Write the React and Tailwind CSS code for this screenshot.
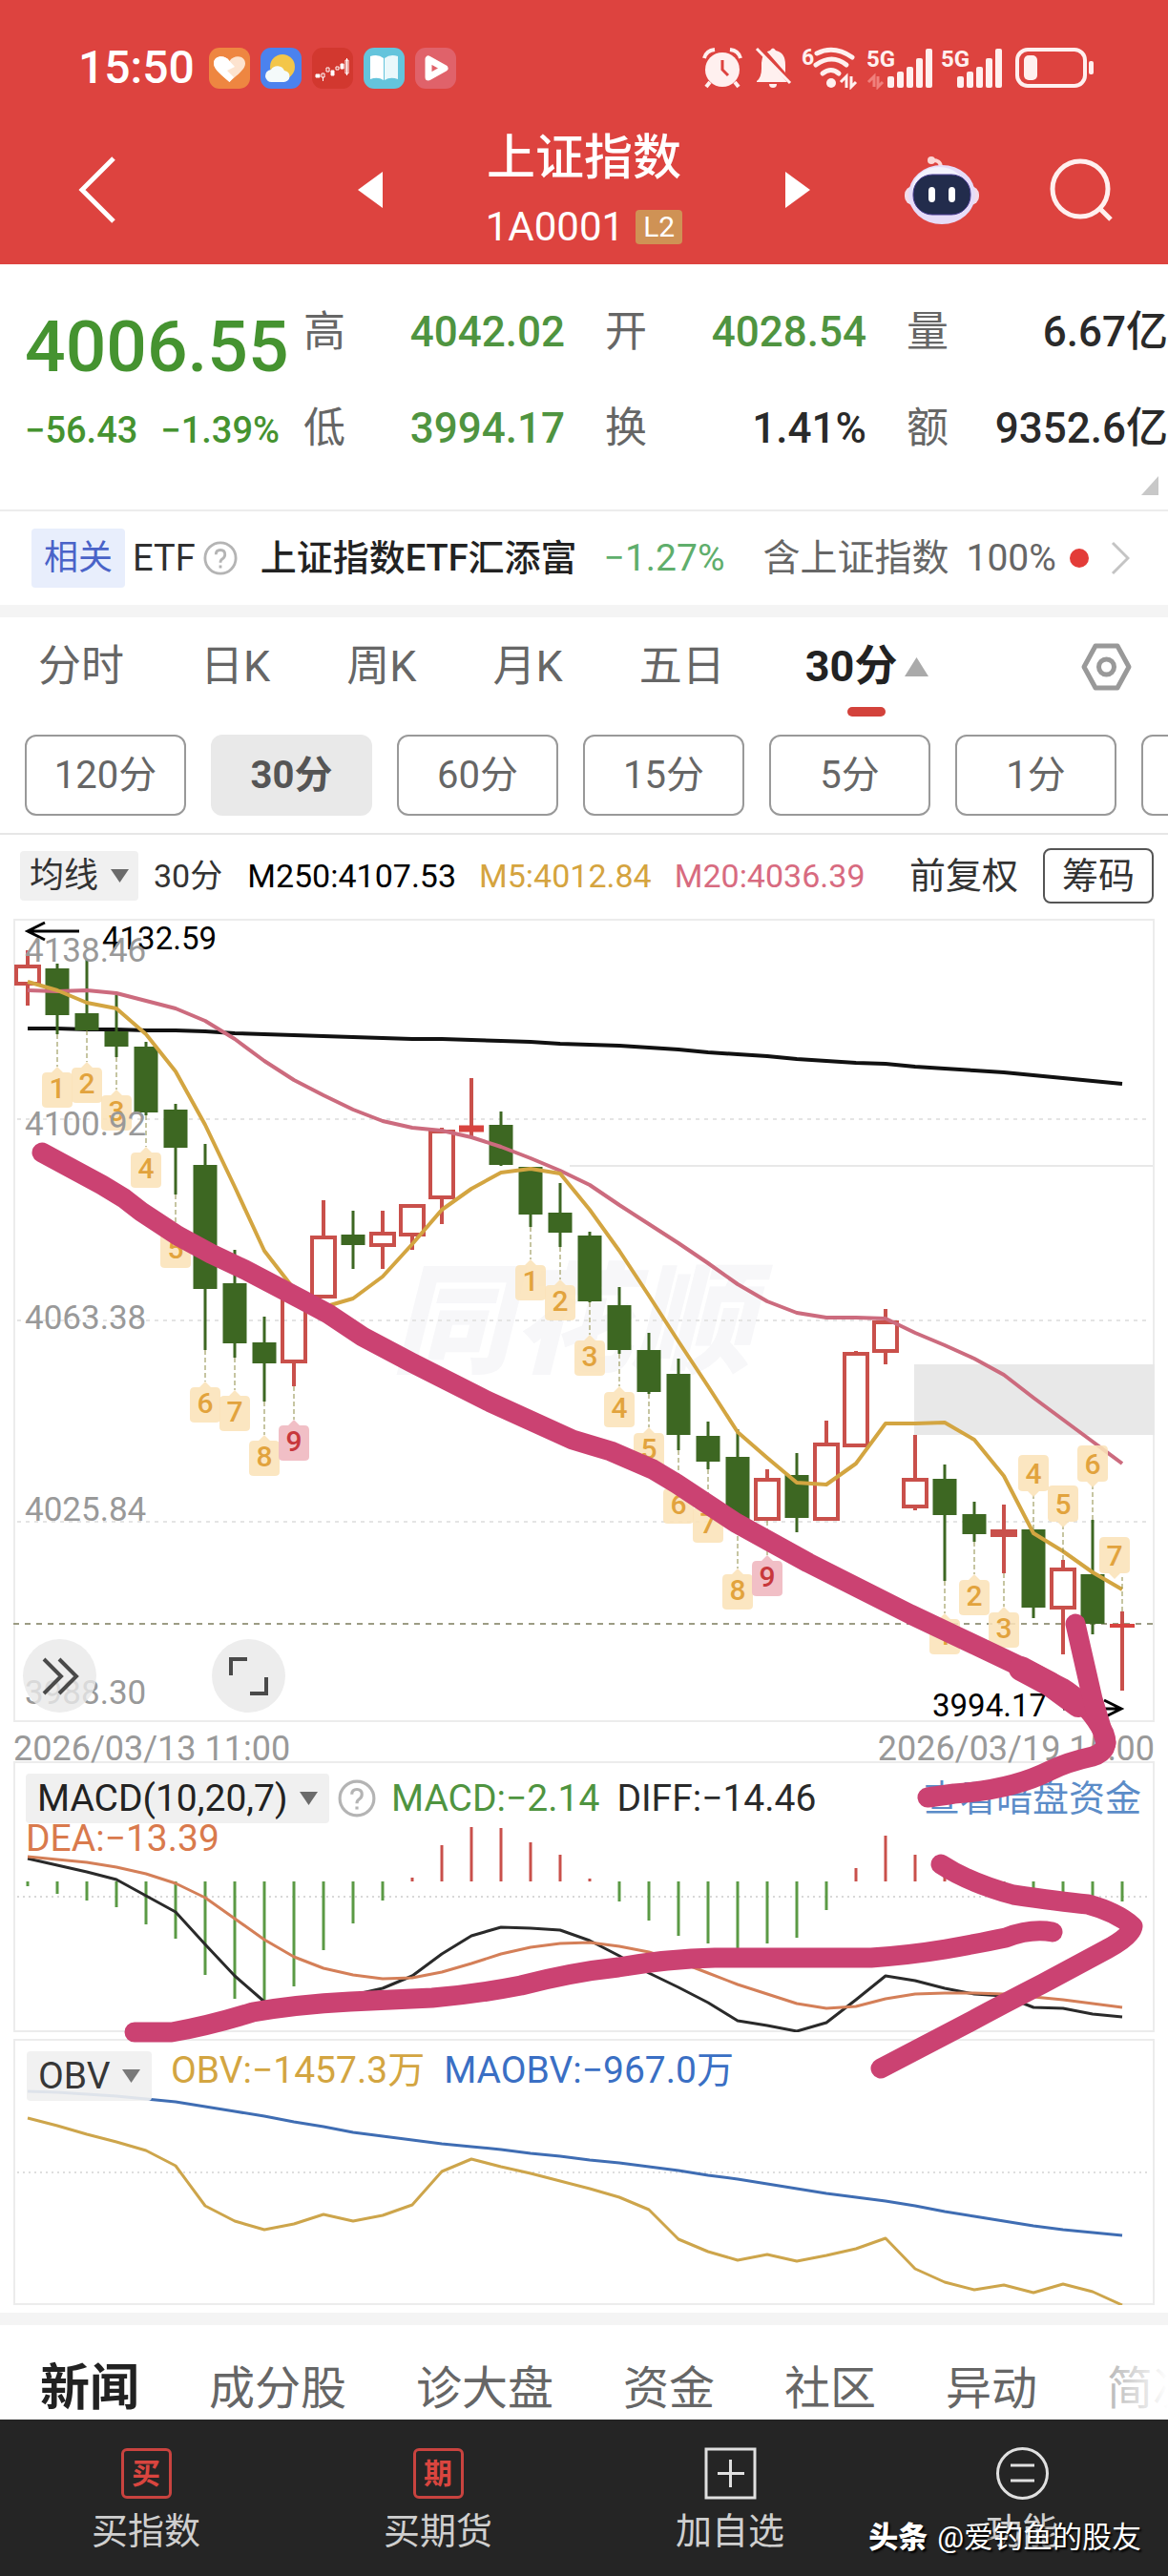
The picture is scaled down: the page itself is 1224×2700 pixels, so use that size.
import React, { useState } from 'react';

const STEP = 31;
const X0 = 15;
const cx = (i) => X0 + i * STEP;

// [up, high, bodyTop, bodyBottom, low]
const candles = [
  [1, 33, 50, 68, 91],
  [0, 47, 52, 101, 121],
  [0, 43, 99, 117, 117],
  [0, 80, 118, 134, 145],
  [0, 129, 134, 203, 206],
  [0, 194, 200, 240, 289],
  [0, 236, 258, 388, 452],
  [0, 347, 382, 445, 460],
  [0, 417, 444, 466, 506],
  [1, 395, 398, 464, 490],
  [1, 295, 334, 396, 396],
  [0, 306, 331, 342, 367],
  [1, 306, 330, 342, 367],
  [1, 300, 301, 331, 347],
  [1, 219, 223, 292, 320],
  [1, 167, 219, 221, 228],
  [0, 202, 216, 258, 259],
  [0, 260, 260, 310, 323],
  [0, 277, 308, 329, 344],
  [0, 328, 332, 401, 402],
  [0, 386, 405, 452, 456],
  [0, 434, 452, 496, 498],
  [0, 461, 477, 541, 557],
  [0, 527, 542, 569, 577],
  [0, 535, 564, 631, 631],
  [1, 577, 588, 629, 631],
  [0, 560, 583, 628, 643],
  [1, 526, 551, 629, 629],
  [1, 453, 456, 552, 552],
  [1, 409, 423, 453, 467],
  [1, 541, 588, 616, 620],
  [0, 572, 587, 625, 694],
  [0, 611, 624, 645, 653],
  [1, 614, 642, 646, 686],
  [0, 640, 640, 722, 733],
  [1, 672, 682, 722, 771],
  [0, 630, 687, 739, 750],
  [1, 726, 740, 740, 809],
];

const ma5 = [66, 75, 88, 94, 121, 160, 216, 281, 348, 388, 407, 398, 375, 341, 305, 283, 266, 262, 267, 305, 348, 395, 443, 490, 538, 565, 591, 593, 571, 529, 529, 528, 546, 584, 644, 663, 685, 703];
const ma20 = [75, 76, 75, 78, 86, 94, 107, 126, 149, 169, 185, 200, 212, 219, 222, 229, 239, 251, 264, 279, 300, 320, 340, 361, 383, 401, 413, 418, 418, 419, 434, 447, 461, 478, 502, 525, 548, 571];
const ma250 = [115, 115, 116, 116, 117, 117, 118, 120, 121, 122, 123, 124, 125, 126, 126, 127, 128, 129, 131, 132, 133, 135, 137, 140, 142, 144, 147, 149, 151, 152, 155, 157, 159, 161, 164, 167, 170, 173];

// [candle, tip y, label]
const tagsBelow = [
  [1, 155, 1], [2, 150, 2], [3, 179, 3], [4, 239, 4], [5, 323, 5], [6, 485, 6], [7, 494, 7], [8, 541, 8], [9, 525, 9],
  [17, 357, 1], [18, 378, 2], [19, 436, 3], [20, 490, 4], [21, 533, 5], [22, 591, 6], [23, 611, 7], [24, 681, 8], [25, 667, 9],
  [31, 728, 1], [32, 687, 2], [33, 721, 3],
];
// [candle, body top, label, x shift of the tag]
const tagsAbove = [[34, 562, 4, 0], [35, 594, 5, 0], [36, 552, 6, 0], [37, 648, 7, -8]];

const macdBars = [131, 139, 146, 153, 171, 186, 224, 249, 252, 236, 198, 170, 146, 122, 88, 69, 70, 85, 98, 123, 147, 167, 183, 191, 199, 191, 185, 156, 112, 78, 98, 118, 130, 129, 135, 138, 142, 147];
const diff = [102, 109, 116, 124, 141, 158, 192, 225, 252, 255, 253, 245, 238, 225, 202, 183, 174, 175, 177, 188, 204, 222, 237, 253, 272, 277, 283, 274, 250, 225, 230, 238, 244, 246, 258, 259, 265, 268];
const dea = [100, 103, 106, 111, 118, 128, 143, 165, 187, 205, 217, 224, 228, 227, 221, 212, 202, 195, 191, 190, 194, 200, 210, 222, 234, 244, 254, 259, 257, 249, 244, 243, 243, 244, 247, 250, 254, 258];

const maobv = [55, 56, 58, 60, 63, 66, 71, 76, 81, 87, 92, 98, 102, 106, 110, 113, 116, 120, 123, 127, 130, 134, 138, 143, 147, 152, 157, 162, 166, 170, 175, 181, 186, 191, 196, 200, 203, 206];
const obv = [83, 91, 100, 108, 117, 133, 175, 191, 200, 194, 184, 191, 185, 174, 139, 126, 134, 141, 149, 157, 166, 179, 210, 223, 232, 226, 233, 227, 220, 209, 241, 255, 263, 258, 266, 257, 265, 279];

const Line = ({ data, color, width = 3 }) => (
  <polyline
    points={data.map((y, i) => `${cx(i)},${y}`).join(' ')}
    fill="none"
    stroke={color}
    strokeWidth={width}
    strokeLinejoin="round"
  />
);

const Candle = ({ i, c }) => {
  const [up, high, top, bottom, low] = c;
  const x = cx(i);
  if (up) {
    const flat = bottom - top < 3;
    return (
      <g stroke="#c9504b" fill="none">
        <path d={`M${x} ${high}V${top}M${x} ${bottom}V${low}`} strokeWidth="4" />
        {flat ? (
          <path d={`M${x - 13} ${top + 1}H${x + 13}`} stroke="#d8433f" strokeWidth={top === bottom ? 4 : 7} />
        ) : (
          <rect x={x - 12} y={top} width="24" height={bottom - top} strokeWidth="4" />
        )}
      </g>
    );
  }
  return (
    <g fill="#3d6722" stroke="none">
      <rect x={x - 1.5} y={high} width="3" height={low - high} />
      <rect x={x - 12.5} y={top} width="25" height={bottom - top} />
    </g>
  );
};

const Tag = ({ x, y, n, down }) => {
  const red = n === 9;
  const d = down
    ? 'M-11 0h22q5 0 5 5v29q0 4-5 4h-5l-6 6-6-6h-5q-5 0-5-4v-29q0-5 5-5z'
    : 'M0 0l6 6h5q5 0 5 5v28q0 4-5 4h-22q-5 0-5-4v-28q0-5 5-5h5z';
  return (
    <g transform={`translate(${x} ${y})`}>
      <path d={d} fill={red ? '#f0bcc3' : '#fbe2b8'} fillOpacity={red ? 0.95 : 0.88} />
      <text y={down ? 30 : 33} textAnchor="middle" fontSize="30" fontWeight="500" fill={red ? '#c8383c' : '#e2a33d'}>
        {n}
      </text>
    </g>
  );
};

const MainChart = () => (
  <svg viewBox="0 0 1196 842" className="block w-full overflow-visible">
    <text x="396" y="466" fontSize="126" fontWeight="900" fontStyle="italic" fill="#f7f7f9">同花顺</text>
    <g stroke="#e4e4e4" strokeWidth="2" strokeDasharray="4 5">
      <path d="M4 210H1192" />
      <path d="M4 421H1192" />
      <path d="M4 632H1192" />
    </g>
    <path d="M583 259H1194" stroke="#e8e8e8" strokeWidth="2" />
    <rect x="944" y="467" width="252" height="74" fill="#e8e8e8" />
    <path d="M0 739H1194" stroke="#9c9c84" strokeWidth="2" strokeDasharray="6 6" />

    <Line data={ma250} color="#111" width={4} />
    {candles.map((c, i) => (
      <Candle key={i} i={i} c={c} />
    ))}
    <Line data={ma20} color="#cc6b7e" width={4} />
    <Line data={ma5} color="#d3a541" width={4} />

    <g strokeWidth="1" strokeDasharray="5 3" stroke="#8d8b45">
      {tagsBelow.map(([i, y]) => (
        <path key={i} d={`M${cx(i)} ${candles[i][4]}V${y}`} />
      ))}
      {tagsAbove.map(([i, y]) => (
        <path key={i} d={`M${cx(i)} ${candles[i][1]}V${y + 42}`} />
      ))}
    </g>
    {tagsBelow.map(([i, y, n]) => (
      <Tag key={i} x={cx(i)} y={y} n={n} />
    ))}
    {tagsAbove.map(([i, y, n, dx]) => (
      <Tag key={i} x={cx(i) + dx} y={y} n={n} down />
    ))}

    <g fill="none" stroke="#000" strokeWidth="3">
      <path d="M69 13H15M33 4L15 13L33 22" />
      <path d="M1100 828H1161M1143 819L1161 828L1143 837" />
    </g>
    <g fontSize="33" fill="#000">
      <text x="93" y="32">4132.59</text>
      <text x="963" y="836">3994.17</text>
    </g>
    <g fontSize="35" fill="#999">
      <text x="12" y="45">4138.46</text>
      <text x="12" y="227">4100.92</text>
      <text x="12" y="430">4063.38</text>
      <text x="12" y="631">4025.84</text>
      <text x="12" y="823">3988.30</text>
    </g>
  </svg>
);

const MacdChart = () => (
  <svg viewBox="0 0 1196 284" className="col-start-1 row-start-1 block w-full">
    <path d="M4 142H1192" stroke="#d8d8d8" strokeWidth="2" strokeDasharray="2 4" />
    {macdBars.map((y, i) => (
      <path key={i} d={`M${cx(i)} 126V${y}`} stroke={y < 126 ? '#c9504b' : '#5b9a45'} strokeWidth="3" />
    ))}
    <Line data={diff} color="#2a2a2a" />
    <Line data={dea} color="#d47f58" />
  </svg>
);

const ObvChart = () => (
  <svg viewBox="0 0 1196 279" className="col-start-1 row-start-1 block w-full">
    <path d="M4 140H1192" stroke="#dedede" strokeWidth="2" strokeDasharray="2 4" />
    <Line data={maobv} color="#3f6db3" />
    <Line data={obv} color="#cda54b" />
  </svg>
);

// Hand-drawn trend arrows laid over all three charts
const Annotations = () => (
  <svg
    viewBox="0 962 1224 1453"
    className="pointer-events-none absolute inset-0 h-full w-full"
    fill="none"
    stroke="#cb4272"
    strokeWidth="21"
    strokeLinecap="round"
    strokeLinejoin="round"
  >
    <path d="M44 1207L107 1241L130 1255L148 1269L186 1294L221 1313L257 1330L316 1361L344 1376L380 1400L431 1427L510 1467L600 1508L640 1520L684 1539L709 1554L771 1595L847 1637L954 1691L1074 1748L1113 1768Q1142 1786 1157 1816Q1164 1834 1145 1840Q1118 1846 1100 1855Q1060 1875 1000 1879Q980 1882 972 1883" />
    <path d="M1070 1748L1100 1764L1130 1786" strokeWidth="26" />
    <path d="M1127 1701L1145 1780L1159 1826" />
    <path d="M141 2129H180Q220 2122 265 2108Q310 2100 367 2097Q410 2095 453 2093Q500 2089 546 2080Q600 2066 648 2061Q700 2052 749 2051H913Q955 2048 991 2042Q1030 2035 1054 2030Q1080 2020 1103 2024" />
    <path d="M986 1953Q1015 1972 1062 1985Q1110 1992 1140 1995Q1170 2003 1187 2018Q1186 2028 1160 2042L1093 2078Q1050 2100 1015 2119L923 2167" />
  </svg>
);

const Caret = () => (
  <svg width="19" height="14" viewBox="0 0 19 14" className="pointer-events-none shrink-0">
    <path d="M0 0H19L9.500 14z" fill="#6b6b6b" />
  </svg>
);

const Help = ({ className }) => (
  <svg viewBox="0 0 38 38" className={className} fill="none" stroke="#b4b4b4" strokeWidth="3">
    <circle cx="19" cy="19" r="17" />
    <path d="M14 15q0-5 5-5t5 5q0 3-3 5-2 1-2 4M19 27v3" />
  </svg>
);

const Picker = ({ label, value, className }) => (
  <label className={`flex h-[52px] items-center gap-3 rounded bg-[#f0f0f0] ${className}`}>
    <select aria-label={label} className="appearance-none bg-transparent leading-[44px] outline-none">
      <option>{value}</option>
    </select>
    <Caret />
  </label>
);

const StatusBar = () => (
  <div className="flex h-[46px] items-center justify-between pr-[76px] pl-[82px]">
    <div className="flex items-center gap-[11px]">
      <span className="mr-1 text-5xl leading-[46px] font-medium">15:50</span>
      <svg width="43" height="43" viewBox="0 0 43 43">
        <rect width="43" height="43" rx="11" fill="#ee8641" />
        <path d="M21.500 36C14 29 5 23 5 16.500C5 8 17 7 21.500 14C26 7 38 8 38 16.500C38 23 29 29 21.500 36z" fill="#fde3cf" />
        <path d="M21.500 36C14 29 5 23 5 16.500C5 8 17 7 21.500 14L27 20L19 24L26 31z" fill="#fff" />
      </svg>
      <svg width="43" height="43" viewBox="0 0 43 43">
        <rect width="43" height="43" rx="11" fill="#4b82ee" />
        <circle cx="23" cy="20" r="13" fill="#f3c649" />
        <path d="M12 36a6.500 6.500 0 0 1-1-13a8 8 0 0 1 14 1a6 6 0 0 1-1 12z" fill="#f4fafa" />
      </svg>
      <svg width="43" height="43" viewBox="0 0 43 43">
        <rect width="43" height="43" rx="11" fill="#d2382f" />
        <g fill="none" stroke="#fff" strokeWidth="1">
          <path d="M4 28h4v3H4z" fill="#fff" />
          <path d="M10 27h3v4h-3zM11.500 31v4M15 21h3v4h-3z" />
          <path d="M20 24h3v5h-3z" fill="#fff" />
          <path d="M25 20h3v3h-3zM35 13h3v14h-3zM36.500 11v18" />
          <path d="M30 17h3v5h-3z" fill="#fff" />
        </g>
      </svg>
      <svg width="43" height="43" viewBox="0 0 43 43">
        <rect width="43" height="43" rx="11" fill="#64c4dc" />
        <path d="M7 9q8-3 14 2v23q-6-4-14-1z" fill="#fff" />
        <path d="M36 9q-8-3-14 2v23q6-4 14-1z" fill="#e9f8fb" />
      </svg>
      <svg width="43" height="43" viewBox="0 0 43 43">
        <rect width="43" height="43" rx="11" fill="#e0626a" />
        <path d="M14 12V31L31 21.500z" fill="#e0626a" stroke="#fff" strokeWidth="7" strokeLinejoin="round" />
      </svg>
    </div>
    <div className="flex items-center">
      <svg width="42" height="44" viewBox="0 0 42 44">
        <circle cx="21" cy="24" r="18" fill="#fff0ef" />
        <path d="M21 14V24L27 30" fill="none" stroke="#dd433f" strokeWidth="3" />
        <path d="M2 12Q4 4 13 3M40 12Q38 4 29 3M8 37L4 42M34 37L38 42" fill="none" stroke="#fff0ef" strokeWidth="4" />
      </svg>
      <svg width="42" height="46" viewBox="0 0 42 46" className="ml-3">
        <path d="M3 37Q8 33 8 24V18Q9 6 17 5Q20 0 23 5Q33 7 33 20V28Q34 34 38 38H3z" fill="#fff0ef" />
        <path d="M16 40a4 4 0 0 0 8 0z" fill="#fff0ef" />
        <path d="M6 1L40 40" stroke="#dd433f" strokeWidth="5" />
        <path d="M3 3L38 39" stroke="#fff0ef" strokeWidth="3" />
      </svg>
      <svg width="60" height="46" viewBox="0 0 60 46" className="ml-2">
        <text x="0" y="20" fontSize="23" fontWeight="700" fill="#fff0ef">6</text>
        <g fill="none" stroke="#fff0ef" strokeWidth="5" strokeLinecap="round">
          <path d="M16 8Q34 -1 53 12" />
          <path d="M15 20Q32 8 47 20" />
          <path d="M22 29Q31 22 39 29" />
        </g>
        <circle cx="31" cy="39" r="5" fill="#fff0ef" />
        <path d="M41 38L47 32V44M52 32V43L57 38" fill="none" stroke="#fff0ef" strokeWidth="3" />
      </svg>
      {[1, 2].map((n) => (
        <svg key={n} width="70" height="46" viewBox="0 0 70 46" className="ml-2">
          <text x="0" y="22" fontSize="24" fontWeight="700" fill="#fff0ef">5G</text>
          {n === 1 && <path d="M2 38L8 32V43M12 32V43L17 38" fill="none" stroke="#f0807c" strokeWidth="3" />}
          {[12, 17, 22, 31, 41].map((h, k) => (
            <rect key={h} x={(n === 1 ? 22 : 17) + k * 10} y={44 - h} width="7" height={h} rx="2" fill="#fff0ef" />
          ))}
        </svg>
      ))}
      <svg width="84" height="44" viewBox="0 0 84 44" className="ml-2">
        <rect x="2" y="3" width="71" height="38" rx="11" fill="none" stroke="#fff0ef" strokeWidth="4" />
        <rect x="9" y="9" width="14" height="26" rx="5" fill="#fff0ef" />
        <rect x="77" y="15" width="5" height="14" rx="2" fill="#fff0ef" />
      </svg>
    </div>
  </div>
);

const Robot = () => (
  <svg width="78" height="72" viewBox="0 0 78 72">
    <path d="M38 13Q38 4 28 5" fill="none" stroke="#ffd5d3" strokeWidth="4" />
    <circle cx="28" cy="5" r="4" fill="#fbd7d6" />
    <rect x="0" y="32" width="78" height="20" rx="9" fill="#f3dcea" />
    <ellipse cx="39" cy="41" rx="35" ry="31" fill="#e6dcf8" />
    <ellipse cx="36" cy="36" rx="28" ry="24" fill="#f3f3fd" />
    <rect x="9" y="20" width="60" height="42" rx="20" fill="#222c4c" stroke="#4c3f96" strokeWidth="1" />
    <rect x="25" y="33" width="7" height="16" rx="4" fill="#fff" />
    <rect x="46" y="33" width="7" height="16" rx="4" fill="#fff" />
  </svg>
);

const Header = () => (
  <header className="bg-[#dd433f] pt-12 pb-[17px] text-white">
    <StatusBar />
    <div className="mt-11 grid grid-cols-[1fr_auto_1fr] items-center">
      <button aria-label="返回" className="w-fit pl-[82px]">
        <svg width="40" height="70" viewBox="0 0 40 70">
          <path d="M37 2L4 35L37 68" fill="none" stroke="#fff" strokeWidth="5" />
        </svg>
      </button>
      <div className="flex w-[474px] items-center justify-between">
        <button aria-label="上一个">
          <svg width="26" height="38" viewBox="0 0 26 38"><path d="M26 0V38L0 19z" fill="#fff" /></svg>
        </button>
        <div className="flex flex-col items-center gap-[22px]">
          <h1 className="text-[51px] leading-[56px] font-medium">上证指数</h1>
          <div className="flex items-center gap-3 text-[42px] leading-[44px]">
            1A0001
            <span className="rounded bg-[#cf9255] px-2 text-[30px] leading-9">L2</span>
          </div>
        </div>
        <button aria-label="下一个">
          <svg width="26" height="38" viewBox="0 0 26 38"><path d="M0 0V38L26 19z" fill="#fff" /></svg>
        </button>
      </div>
      <div className="flex items-center justify-end gap-[74px] pr-[58px]">
        <button aria-label="助手"><Robot /></button>
        <button aria-label="搜索">
          <svg width="66" height="66" viewBox="0 0 66 66" fill="none" stroke="#fff0ef" strokeWidth="5">
            <circle cx="32" cy="32" r="29" />
            <path d="M51 51L64 64" />
          </svg>
        </button>
      </div>
    </div>
  </header>
);

const quotes = [
  ['高', '4042.02', 'text-[#4f9440]'],
  ['开', '4028.54', 'text-[#4f9440]'],
  ['量', '6.67亿', 'text-[#2a2a2a]'],
  ['低', '3994.17', 'text-[#4f9440]'],
  ['换', '1.41%', 'text-[#2a2a2a]'],
  ['额', '9352.6亿', 'text-[#2a2a2a]'],
];

const Quote = () => (
  <section className="border-b-2 border-[#ececec] pt-[43px]">
    <div className="flex pl-[26px] font-medium">
      <div className="w-[292px] shrink-0 text-[#459330]">
        <div className="text-[75px] leading-[86px]">4006.55</div>
        <div className="mt-[19px] flex gap-6 text-[38px] leading-[52px]">
          <span>−56.43</span>
          <span>−1.39%</span>
        </div>
      </div>
      <dl className="grid flex-1 grid-cols-3 gap-x-[42px] gap-y-[44px] text-[44px] leading-[56px]">
        {quotes.map(([k, v, color]) => (
          <div key={k} className="flex justify-between whitespace-nowrap">
            <dt className="font-normal text-[#666]">{k}</dt>
            <dd className={color}>{v}</dd>
          </div>
        ))}
      </dl>
    </div>
    <div className="mt-[22px] flex justify-end pr-[10px] pb-[15px]">
      <svg width="18" height="20" viewBox="0 0 18 20"><path d="M18 0V20H0z" fill="#c8c8c8" /></svg>
    </div>
  </section>
);

const EtfRow = () => (
  <a href="#etf" className="flex items-center border-b-[13px] border-[#f4f4f4] py-4 pr-10 pl-[33px] text-[38px] leading-[66px] whitespace-nowrap">
    <span className="rounded bg-[#e8eefc] px-[13px] text-4xl leading-[62px] text-[#4a63c8]">相关</span>
    <span className="ml-2 text-[#2f2f2f]">ETF</span>
    <Help className="ml-2 w-9" />
    <span className="ml-6 font-medium text-[#222]">上证指数ETF汇添富</span>
    <span className="ml-7 text-[39px] text-[#5fae6c]">−1.27%</span>
    <span className="ml-10 text-[39px] text-[#666]">含上证指数</span>
    <span className="ml-[18px] text-[39px] text-[#666]">100%</span>
    <span className="ml-[14px] size-5 rounded-full bg-[#e33c38]" />
    <svg width="20" height="36" viewBox="0 0 20 36" className="ml-auto">
      <path d="M2 2L18 18L2 34" fill="none" stroke="#c4c4c4" strokeWidth="3" />
    </svg>
  </a>
);

const periods = ['分时', '日K', '周K', '月K', '五日'];
const minutes = ['120分', '30分', '60分', '15分', '5分', '1分', '更多'];

const PeriodTabs = () => {
  const [minute, setMinute] = useState('30分');
  return (
    <section className="border-b-2 border-[#e6e6e6] pb-[18px]">
      <nav className="flex items-center gap-20 pt-[22px] pr-[38px] pb-[41px] pl-[40px] text-[45px] leading-[60px] text-[#666]">
        {periods.map((p) => (
          <button key={p}>{p}</button>
        ))}
        <button className="relative ml-1 flex items-center gap-2 font-bold text-[#222]">
          30分
          <svg width="25" height="20" viewBox="0 0 25 20"><path d="M12.500 0L25 20H0z" fill="#aaa" /></svg>
          <span className="absolute -bottom-[22px] left-11 h-[10px] w-10 rounded-full bg-[#d3423b]" />
        </button>
        <button aria-label="设置" className="ml-auto">
          <svg width="53" height="50" viewBox="0 0 53 50" fill="none" stroke="#999" strokeWidth="5" strokeLinejoin="round">
            <path d="M15 3H38L50 25L38 47H15L3 25z" />
            <circle cx="26.500" cy="25" r="8" />
          </svg>
        </button>
      </nav>
      <div className="flex gap-[26px] overflow-hidden pl-[26px] text-[40px] text-[#666]">
        {minutes.map((m) => (
          <button
            key={m}
            onClick={() => setMinute(m)}
            className={
              m === minute
                ? 'h-[85px] w-[169px] shrink-0 rounded-xl bg-[#e9e9e9] font-bold text-[#555]'
                : 'h-[85px] w-[169px] shrink-0 rounded-xl border-2 border-[#999]'
            }
          >
            {m}
          </button>
        ))}
      </div>
    </section>
  );
};

const MaRow = () => (
  <div className="flex items-center pt-[14px] pr-[15px] pb-4 pl-[21px] text-[34px] whitespace-nowrap text-[#333]">
    <Picker label="主图指标" value="均线" className="px-[10px] text-4xl" />
    <span className="ml-4">30分</span>
    <span className="ml-[26px] text-black">M250:4107.53</span>
    <span className="ml-6 text-[#d5a43f]">M5:4012.84</span>
    <span className="ml-6 text-[#d86b80]">M20:4036.39</span>
    <span className="ml-auto text-[38px]">前复权</span>
    <button className="ml-[26px] h-[58px] rounded-lg border-2 border-[#555] px-[18px] text-[38px] leading-[54px]">筹码</button>
  </div>
);

const Charts = () => (
  <section className="relative px-[14px]">
    <div className="relative ring-2 ring-[#ececec] ring-inset">
      <MainChart />
      <div className="absolute bottom-[10px] left-[10px] flex gap-[121px]">
        <button aria-label="展开" className="size-[77px] rounded-full bg-[#e9e9e9]/80">
          <svg viewBox="0 0 77 77" fill="none" stroke="#4a4a4a" strokeWidth="4">
            <path d="M22 21L40 39L22 57M38 21L56 39L38 57" />
          </svg>
        </button>
        <button aria-label="全屏" className="size-[77px] rounded-full bg-[#e9e9e9]/80">
          <svg viewBox="0 0 77 77" fill="none" stroke="#4a4a4a" strokeWidth="4">
            <path d="M20 38V21H37M57 40V57H40" />
          </svg>
        </button>
      </div>
    </div>
    <div className="flex h-[41px] items-start justify-between text-4xl leading-[56px] text-[#999]">
      <span>2026/03/13 11:00</span>
      <span>2026/03/19 15:00</span>
    </div>

    <div className="grid text-[39px] leading-[44px] whitespace-nowrap ring-2 ring-[#ececec] ring-inset">
      <MacdChart />
      <div className="col-start-1 row-start-1 pt-[13px] pr-[14px] pl-[13px]">
        <div className="flex items-center">
          <Picker label="副图指标一" value="MACD(10,20,7)" className="px-[12px] text-[#222]" />
          <Help className="ml-[9px] w-10" />
          <span className="ml-4 text-[#4f9440]">MACD:−2.14</span>
          <span className="ml-[18px] text-[#2a2a2a]">DIFF:−14.46</span>
          <a href="#fund" className="ml-auto text-[38px] text-[#5b8cc8]">查看暗盘资金</a>
        </div>
        <div className="-mt-1 leading-[40px] text-[#d97a4d]">DEA:−13.39</div>
      </div>
    </div>

    <div className="mt-[7px] grid text-[39px] leading-[40px] whitespace-nowrap ring-2 ring-[#ececec] ring-inset">
      <ObvChart />
      <div className="col-start-1 row-start-1 flex items-start gap-5 pt-[13px] pl-[14px]">
        <Picker label="副图指标二" value="OBV" className="px-[12px] text-[#222] opacity-90" />
        <span className="text-[#d3a541]">OBV:−1457.3万</span>
        <span className="text-[#3a6fc4]">MAOBV:−967.0万</span>
      </div>
    </div>
    <Annotations />
  </section>
);

const newsTabs = ['成分股', '诊大盘', '资金', '社区', '异动', '简况'];

const NewsTabs = () => (
  <nav className="relative mt-2 flex gap-[73px] overflow-hidden border-t-[13px] border-[#f4f4f4] pt-[37px] pb-[2px] pl-[42px] text-5xl leading-[60px] whitespace-nowrap text-[#666]">
    <button className="text-[52px] font-bold text-[#222]">新闻</button>
    {newsTabs.map((t) => (
      <button key={t}>{t}</button>
    ))}
    <span className="pointer-events-none absolute inset-y-0 right-0 w-24 bg-linear-to-r from-white/30 to-white" />
  </nav>
);

const BottomBar = () => (
  <footer className="relative grid grid-cols-4 bg-[#252525] pt-7 pb-[25px] text-[38px] leading-[56px] text-[#cfcfcf]">
    <button className="flex flex-col items-center gap-1">
      <span className="my-[2px] flex size-[53px] items-center justify-center rounded-md border-3 border-[#c9433f] text-[30px] font-bold text-[#d9453f]">买</span>
      买指数
    </button>
    <button className="flex flex-col items-center gap-1">
      <span className="my-[2px] flex size-[53px] items-center justify-center rounded-md border-3 border-[#c9433f] text-[30px] font-bold text-[#d9453f]">期</span>
      买期货
    </button>
    <button className="flex flex-col items-center gap-1">
      <svg width="57" height="57" viewBox="0 0 57 57" fill="none" stroke="#e0e0e0" strokeWidth="3">
        <path d="M3 3H54V54H3zM15 28.500H43M28.500 14V43" />
      </svg>
      加自选
    </button>
    <button className="flex flex-col items-center gap-1">
      <svg width="57" height="57" viewBox="0 0 57 57" fill="none" stroke="#e0e0e0" strokeWidth="3">
        <circle cx="28.500" cy="28.500" r="26" />
        <path d="M16 20H41M16 36H41" />
      </svg>
      功能
    </button>
    <div className="absolute right-[28px] bottom-[24px] flex items-center gap-[10px] text-[31px] leading-[44px] text-white text-shadow-[2px_2px_2px_#000]">
      <b className="font-black">头条</b>
      <span>@爱钓鱼的股友</span>
    </div>
  </footer>
);

export default function App() {
  return (
    <main className="min-h-screen overflow-hidden bg-white font-[Roboto,'Noto_Sans_CJK_SC',sans-serif]">
      <Header />
      <Quote />
      <EtfRow />
      <PeriodTabs />
      <MaRow />
      <Charts />
      <NewsTabs />
      <BottomBar />
    </main>
  );
}
